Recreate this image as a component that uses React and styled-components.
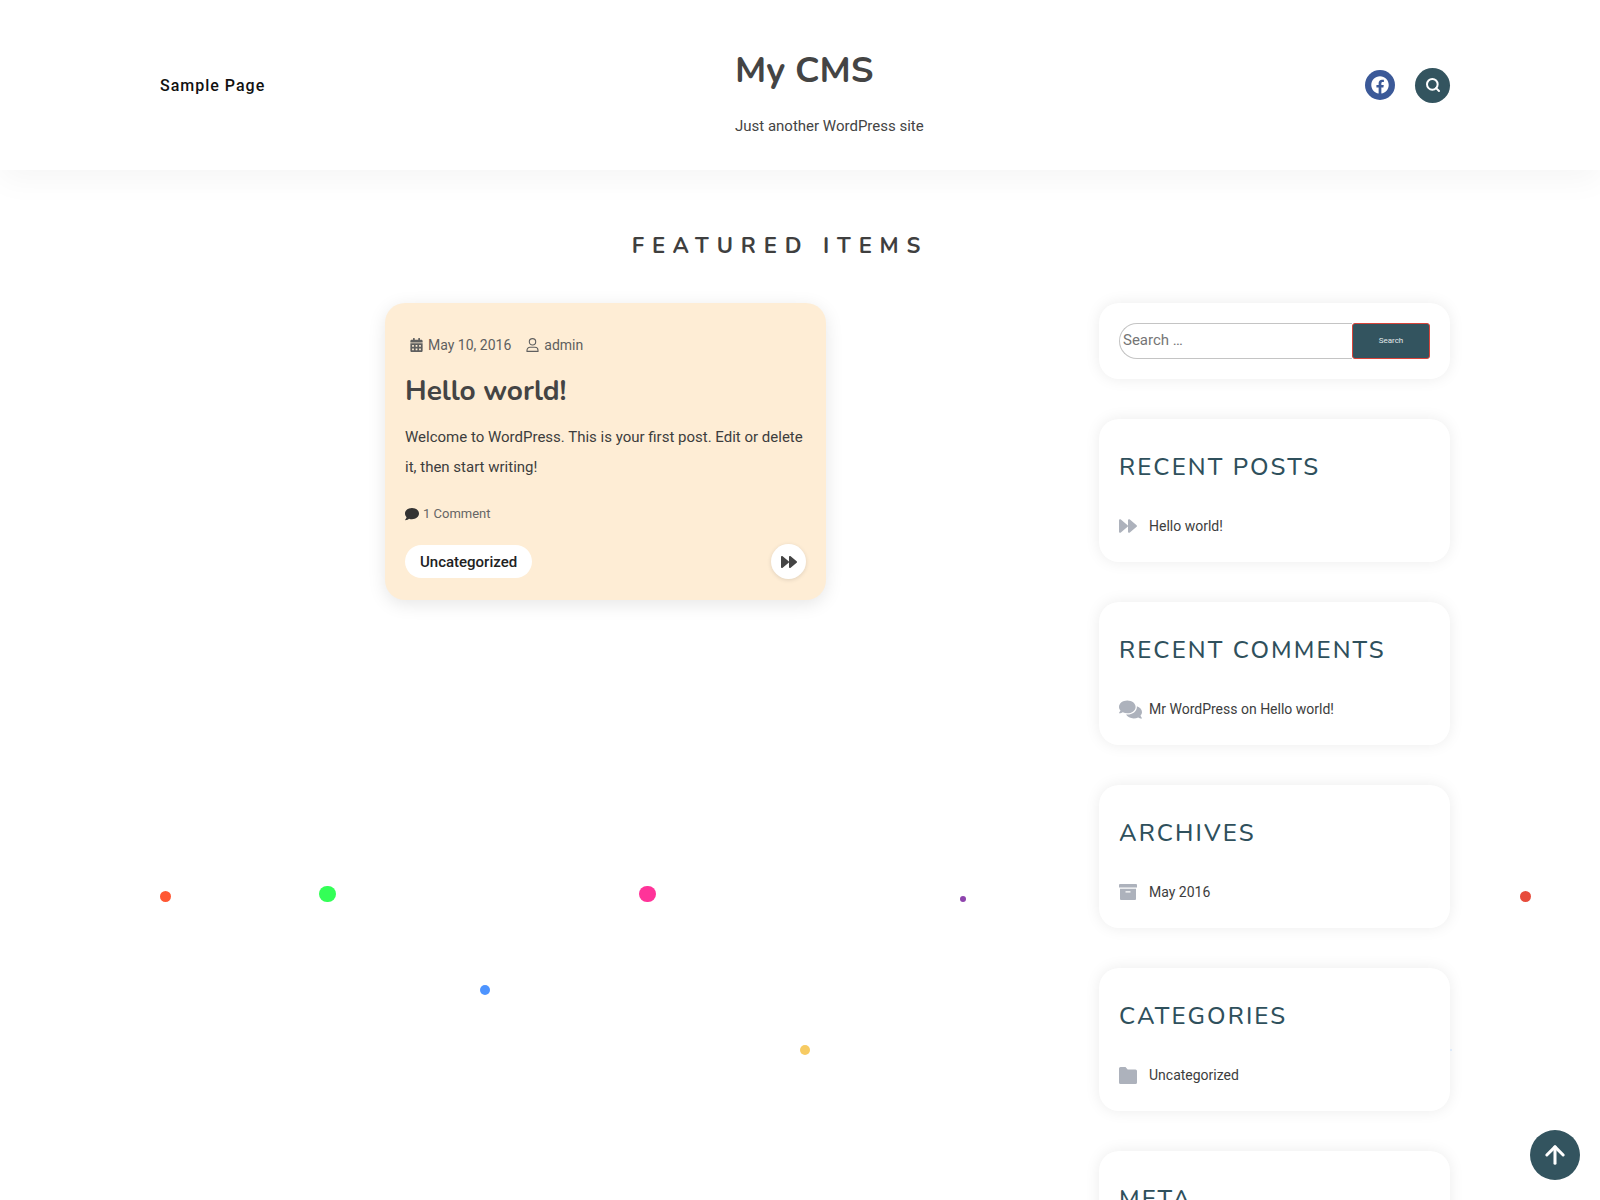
import styled, { createGlobalStyle } from 'styled-components';
import { FaFacebook, FaCalendarAlt, FaComment, FaComments, FaForward } from 'react-icons/fa';
import { FiArrowUp } from 'react-icons/fi';
import { Search } from 'lucide-react';

const heading = '"Nunito", "Lato", "Open Sans", sans-serif';

const GlobalStyle = createGlobalStyle`
  html, body {
    margin: 0;
    height: 1200px;
    overflow: hidden;
    background: #fff;
    font-family: "Roboto", "Liberation Sans", sans-serif;
    color: #3d3d3d;
  }
  * { box-sizing: border-box; }
`;

const Page = styled.div`
  position: relative;
  height: 1200px;
  overflow: hidden;
`;

const Header = styled.header`
  height: 170px;
  padding: 0 150px 0 160px;
  display: flex;
  align-items: center;
  justify-content: space-between;
  box-shadow: 0 10px 30px rgba(0, 0, 0, 0.04);
`;

const NavLink = styled.a`
  width: 575px;
  font-size: 16px;
  font-weight: 500;
  letter-spacing: 1px;
  color: #111;
`;

const Brand = styled.div`
  flex: 1;
  padding-top: 11px;
`;

const SiteTitle = styled.h1`
  margin: 0 0 20px;
  font-family: ${heading};
  font-size: 36px;
  line-height: 50px;
  font-weight: 700;
  color: #444;
`;

const Tagline = styled.p`
  margin: 0;
  font-size: 15px;
  line-height: 20px;
  color: #444;
`;

const Social = styled.div`
  display: flex;
  align-items: center;
  gap: 20px;
`;

const RoundIcon = styled.a`
  width: ${props => props.size}px;
  height: ${props => props.size}px;
  border-radius: 50%;
  background: ${props => props.color};
  color: #fff;
  display: flex;
  align-items: center;
  justify-content: center;
`;

const SectionTitle = styled.h2`
  margin: 0;
  padding: 62px 0 0;
  width: 1560px;
  text-align: center;
  font-family: ${heading};
  font-size: 22px;
  line-height: 28px;
  font-weight: 700;
  letter-spacing: 7.85px;
  color: #3f3f3f;
`;

const Content = styled.div`
  display: flex;
  justify-content: space-between;
  align-items: flex-start;
  padding: 43px 150px 0 385px;
`;

const PostCard = styled.article`
  width: 441px;
  height: 297px;
  padding: 32px 20px 20px;
  border-radius: 20px;
  background: #feedd5;
  box-shadow: 0 4px 18px rgba(0, 0, 0, 0.1);
`;

const PostMeta = styled.div`
  display: flex;
  align-items: center;
  gap: 15px;
  padding-left: 5px;
  font-size: 14px;
  line-height: 20px;
  font-weight: 400;
  color: #5f5f5f;
`;

const MetaItem = styled.span`
  display: inline-flex;
  align-items: center;
  gap: 5px;
  svg { width: 13px; height: 14px; }
`;

const PostTitle = styled.h3`
  margin: 16px 0 0;
  font-family: ${heading};
  font-size: 28px;
  line-height: 40px;
  font-weight: 700;
  color: #444;
`;

const PostText = styled.p`
  margin: 11px 0 0;
  font-size: 15px;
  line-height: 30px;
  color: #3d3d3d;
`;

const CommentLine = styled.div`
  margin-top: 23px;
  display: flex;
  align-items: center;
  gap: 4px;
  font-size: 13px;
  line-height: 18px;
  color: #666;
  svg { font-size: 14px; color: #333; }
`;

const CardFooter = styled.div`
  margin-top: 21px;
  display: flex;
  align-items: center;
  justify-content: space-between;
`;

const CategoryTag = styled.a`
  height: 33px;
  padding: 0 15px;
  border-radius: 17px;
  background: #fff;
  display: flex;
  align-items: center;
  font-size: 15px;
  font-weight: 500;
  color: #222;
`;

const NextButton = styled.a`
  width: 35px;
  height: 35px;
  border-radius: 50%;
  background: #fff;
  color: #444;
  font-size: 16px;
  display: flex;
  align-items: center;
  justify-content: center;
  box-shadow: 0 1px 4px rgba(0, 0, 0, 0.12);
`;

const Sidebar = styled.aside`
  width: 351px;
  display: flex;
  flex-direction: column;
  gap: 40px;
`;

const Widget = styled.section`
  padding: 20px;
  border-radius: 20px;
  background: #fff;
  box-shadow: 0 0 15px rgba(0, 0, 0, 0.08);
`;

const SearchForm = styled.form`
  display: flex;
  height: 36px;
`;

const SearchInput = styled.input`
  flex: 1;
  min-width: 0;
  padding: 0 3px 2px;
  border: 1px solid #c4c4c4;
  border-right: 0;
  border-radius: 18px 0 0 18px;
  font-family: inherit;
  font-size: 15px;
  color: #666;
  outline: none;
  &::placeholder { color: #757575; }
`;

const SearchButton = styled.button`
  width: 78px;
  border: 1px solid #d9443a;
  border-radius: 3px;
  background: #33545f;
  color: #e4e9ea;
  font-family: inherit;
  font-size: 8px;
  padding: 0 0 2px;
`;

const WidgetTitle = styled.h2`
  margin: 10px 0 0;
  font-family: ${heading};
  font-size: 24px;
  line-height: 36px;
  font-weight: 500;
  letter-spacing: 2.1px;
  text-transform: uppercase;
  color: #2f505c;
`;

const WidgetRow = styled.div`
  margin-top: 29px;
  margin-bottom: 4px;
  display: flex;
  align-items: center;
  height: 24px;
  font-size: 14px;
  color: #3d3d3d;
`;

const RowIcon = styled.span`
  width: 30px;
  flex: none;
  display: flex;
  align-items: center;
  color: #adb2bc;
  font-size: 18px;
`;

const Dot = styled.span`
  position: absolute;
  left: ${props => props.x - props.d / 2}px;
  top: ${props => props.y - props.d / 2}px;
  width: ${props => props.d}px;
  height: ${props => props.d}px;
  border-radius: 50%;
  background: ${props => props.color};
`;

const ScrollTop = styled.a`
  position: fixed;
  left: 1530px;
  top: 1130px;
  width: 50px;
  height: 50px;
  border-radius: 50%;
  background: #33545f;
  color: #fff;
  display: flex;
  align-items: center;
  justify-content: center;
`;

const UserIcon = () => (
  <svg viewBox="0 0 13 14" fill="none" stroke="currentColor" strokeWidth="1.1">
    <circle cx="6.5" cy="3.8" r="3.2" />
    <path d="M1 13.4v-1.2a3 3 0 0 1 3-3h5a3 3 0 0 1 3 3v1.2z" />
  </svg>
);

const ArchiveIcon = () => (
  <svg width="18" height="16" viewBox="0 0 18 16" fill="currentColor">
    <path d="M1 0h16a1 1 0 0 1 1 1v2.5H0V1a1 1 0 0 1 1-1z" />
    <path fillRule="evenodd" d="M1 4.8h16V15a1 1 0 0 1-1 1H2a1 1 0 0 1-1-1V4.8zM6.5 7.2v1.2h5V7.2h-5z" />
  </svg>
);

const FolderIcon = () => (
  <svg width="18" height="17" viewBox="0 0 18 17" fill="currentColor">
    <path d="M1.5 0h5l2.2 2.6h7.8A1.5 1.5 0 0 1 18 4.1v11.4a1.5 1.5 0 0 1-1.5 1.5h-15A1.5 1.5 0 0 1 0 15.5v-14A1.5 1.5 0 0 1 1.5 0z" />
  </svg>
);

const dots = [
  { x: 165, y: 896, d: 11, color: '#ff5733' },
  { x: 327.4, y: 893.7, d: 16.3, color: '#33ff57' },
  { x: 647.4, y: 893.7, d: 16.3, color: '#ff3399' },
  { x: 962.7, y: 898.8, d: 6, color: '#8e44ad' },
  { x: 1525, y: 896, d: 11, color: '#e74c3c' },
  { x: 485, y: 990, d: 10.6, color: '#4d94ff' },
  { x: 805, y: 1050.3, d: 10.4, color: '#f7cb63' },
  { x: 1450.5, y: 1050, d: 2, color: '#d5e6fb' },
];

const widgets = [
  { title: 'Recent Posts', icon: <FaForward />, text: 'Hello world!' },
  { title: 'Recent Comments', icon: <FaComments style={{ fontSize: 23 }} />, text: 'Mr WordPress on Hello world!' },
  { title: 'Archives', icon: <ArchiveIcon />, text: 'May 2016' },
  { title: 'Categories', icon: <FolderIcon />, text: 'Uncategorized' },
];

export default function App() {
  return (
    <Page>
      <GlobalStyle />
      <Header>
        <NavLink>Sample Page</NavLink>
        <Brand>
          <SiteTitle>My CMS</SiteTitle>
          <Tagline>Just another WordPress site</Tagline>
        </Brand>
        <Social>
          <RoundIcon size={30} color="#3b5998"><FaFacebook size={18} /></RoundIcon>
          <RoundIcon size={35} color="#33545f"><Search size={16} strokeWidth={3} /></RoundIcon>
        </Social>
      </Header>

      <SectionTitle>FEATURED ITEMS</SectionTitle>

      <Content>
        <PostCard>
          <PostMeta>
            <MetaItem><FaCalendarAlt />May 10, 2016</MetaItem>
            <MetaItem><UserIcon />admin</MetaItem>
          </PostMeta>
          <PostTitle>Hello world!</PostTitle>
          <PostText>Welcome to WordPress. This is your first post. Edit or delete it, then start writing!</PostText>
          <CommentLine><FaComment />1 Comment</CommentLine>
          <CardFooter>
            <CategoryTag>Uncategorized</CategoryTag>
            <NextButton><FaForward /></NextButton>
          </CardFooter>
        </PostCard>

        <Sidebar>
          <Widget>
            <SearchForm onSubmit={e => e.preventDefault()}>
              <SearchInput placeholder="Search …" />
              <SearchButton>Search</SearchButton>
            </SearchForm>
          </Widget>
          {widgets.map(w => (
            <Widget key={w.title}>
              <WidgetTitle>{w.title}</WidgetTitle>
              <WidgetRow>
                <RowIcon>{w.icon}</RowIcon>
                {w.text}
              </WidgetRow>
            </Widget>
          ))}
          <Widget>
            <WidgetTitle>Meta</WidgetTitle>
          </Widget>
        </Sidebar>
      </Content>

      {dots.map(d => <Dot key={d.x} x={d.x} y={d.y} d={d.d} color={d.color} />)}

      <ScrollTop><FiArrowUp size={28} strokeWidth={2.6} /></ScrollTop>
    </Page>
  );
}
